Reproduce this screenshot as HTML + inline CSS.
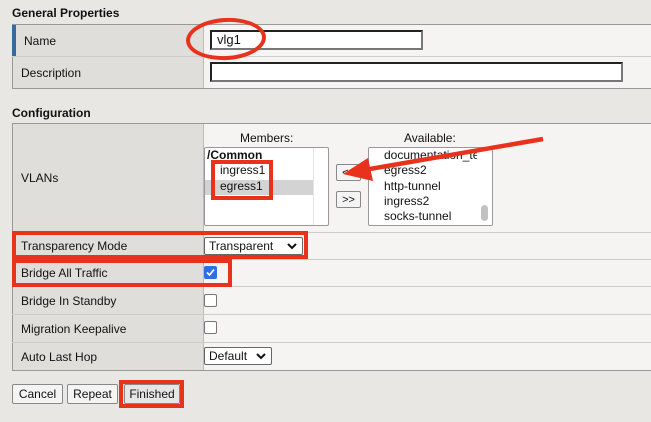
<!DOCTYPE html>
<html><head><style>
*{box-sizing:border-box;margin:0;padding:0}
body{width:651px;height:422px;background:#e8e7e3;font-family:"Liberation Sans",sans-serif;font-size:12px;color:#111;position:relative;overflow:hidden}
.a{position:absolute}
.h{font-weight:bold;font-size:12px}
.lab{position:absolute;left:12px;width:191px;background:#dfdedb;border-left:1px solid #999;padding-left:8px;display:flex;align-items:center}
.val{position:absolute;left:203px;right:0;background:#f5f4f2;border-left:1px solid #bbb}
.line{position:absolute;left:12px;right:0;height:1px;background:#ccc}
.red{position:absolute;border:4px solid #e8321c}
.btn{position:absolute;top:384px;height:20px;border:1px solid #888;border-radius:2px;background:#f4f4f4;font-size:12px;display:flex;align-items:center;justify-content:center}
.cb{position:absolute;width:13px;height:13px;border:1px solid #777;border-radius:2px;background:#fff}
.sel{position:absolute;height:18px;border:1px solid #666;border-radius:2px;background:#fff;padding-left:4px;font-size:12px;display:flex;align-items:center}
.chev{position:absolute;right:5px;top:3px}
.list{position:absolute;background:#fff;border:1px solid #999;border-radius:2px;font-size:12px;line-height:15px}
</style></head><body>
<div class="a h" style="left:12px;top:6px">General Properties</div>
<div class="a" style="left:12px;top:24px;right:0;height:1px;background:#999"></div>
<div class="lab" style="top:25px;height:31px;border-left:4px solid #3a6a9a">Name</div>
<div class="val" style="top:25px;height:31px"></div>
<div class="line" style="top:56px"></div>
<div class="lab" style="top:57px;height:31px">Description</div>
<div class="val" style="top:57px;height:31px"></div>
<div class="a" style="left:12px;top:88px;right:0;height:1px;background:#999"></div>
<div class="a" style="left:210px;top:30px;width:213px;height:20px;background:#fff;border:2px solid #222;border-right-color:#777;border-bottom-color:#777;padding-left:5px;font-size:13px;line-height:16px">vlg1</div>
<div class="a" style="left:210px;top:62px;width:413px;height:20px;background:#fff;border:2px solid #222;border-right-color:#777;border-bottom-color:#777"></div>
<div class="a" style="left:186px;top:18px;width:80px;height:42px;border:4px solid #e8321c;border-radius:50%;transform:rotate(-3deg)"></div>

<div class="a h" style="left:12px;top:106px">Configuration</div>
<div class="a" style="left:12px;top:123px;right:0;height:1px;background:#999"></div>
<div class="lab" style="top:124px;height:108px">VLANs</div>
<div class="val" style="top:124px;height:108px"></div>
<div class="a" style="left:240px;top:131px">Members:</div>
<div class="a" style="left:404px;top:131px">Available:</div>
<div class="list" style="left:204px;top:147px;width:125px;height:79px">
 <div style="position:absolute;left:0;top:32px;width:108px;height:15px;background:#d3d3d3"></div>
 <div style="position:absolute;left:108px;top:0;width:1px;height:77px;background:#e5e5e5"></div>
 <div style="position:absolute;left:2px;top:0;font-weight:bold">/Common</div>
 <div style="position:absolute;left:15px;top:15px">ingress1</div>
 <div style="position:absolute;left:15px;top:31px">egress1</div>
</div>
<div class="list" style="left:368px;top:147px;width:125px;height:79px;overflow:hidden">
 <div style="position:absolute;left:15px;top:0;white-space:nowrap;width:93px;overflow:hidden">documentation_tenant</div>
 <div style="position:absolute;left:15px;top:15px">egress2</div>
 <div style="position:absolute;left:15px;top:31px">http-tunnel</div>
 <div style="position:absolute;left:15px;top:46px">ingress2</div>
 <div style="position:absolute;left:15px;top:61px">socks-tunnel</div>
 <div style="position:absolute;left:112px;top:57px;width:7px;height:16px;background:#c2c2c2;border-radius:4px"></div>
</div>
<div class="btn" style="left:336px;top:164px;width:25px;height:17px;font-size:11px">&lt;&lt;</div>
<div class="btn" style="left:336px;top:191px;width:25px;height:17px;font-size:11px">&gt;&gt;</div>
<div class="red" style="left:211px;top:160px;width:62px;height:40px"></div>
<svg class="a" style="left:340px;top:133px" width="205" height="50"><line x1="203" y1="6" x2="24" y2="37" stroke="#e8321c" stroke-width="4.5"/><polygon points="3,41 28,25 33,48" fill="#e8321c"/></svg>

<div class="a" style="left:12px;top:232px;right:0;height:1px;background:#ccc"></div>
<div class="lab" style="top:233px;height:26px">Transparency Mode</div>
<div class="val" style="top:233px;height:26px"></div>
<div class="line" style="top:259px"></div>
<div class="lab" style="top:260px;height:26px">Bridge All Traffic</div>
<div class="val" style="top:260px;height:26px"></div>
<div class="line" style="top:286px"></div>
<div class="lab" style="top:287px;height:27px">Bridge In Standby</div>
<div class="val" style="top:287px;height:27px"></div>
<div class="line" style="top:314px"></div>
<div class="lab" style="top:315px;height:27px">Migration Keepalive</div>
<div class="val" style="top:315px;height:27px"></div>
<div class="line" style="top:342px"></div>
<div class="lab" style="top:343px;height:27px">Auto Last Hop</div>
<div class="val" style="top:343px;height:27px"></div>
<div class="a" style="left:12px;top:370px;right:0;height:1px;background:#999"></div>

<div class="sel" style="left:204px;top:237px;width:99px">Transparent<svg class="chev" width="10" height="10"><path d="M1 3 L5 7 L9 3" stroke="#111" stroke-width="2" fill="none"/></svg></div>
<div class="red" style="left:12px;top:231px;width:296px;height:28px"></div>
<div class="cb" style="left:204px;top:266px;background:#2f6ee6;border-color:#2f6ee6"><svg width="11" height="11" style="position:absolute;left:0;top:0"><path d="M2 5.5 L4.5 8 L9 2.5" stroke="#fff" stroke-width="1.7" fill="none"/></svg></div>
<div class="red" style="left:12px;top:259px;width:220px;height:28px"></div>
<div class="cb" style="left:204px;top:294px"></div>
<div class="cb" style="left:204px;top:321px"></div>
<div class="sel" style="left:204px;top:347px;width:68px">Default<svg class="chev" width="10" height="10"><path d="M1 3 L5 7 L9 3" stroke="#111" stroke-width="2" fill="none"/></svg></div>

<div class="btn" style="left:12px;width:51px">Cancel</div>
<div class="btn" style="left:67px;width:51px">Repeat</div>
<div class="btn" style="left:124px;width:56px;background:#e6e6e6">Finished</div>
<div class="red" style="left:119px;top:380px;width:65px;height:28px"></div>
</body></html>
